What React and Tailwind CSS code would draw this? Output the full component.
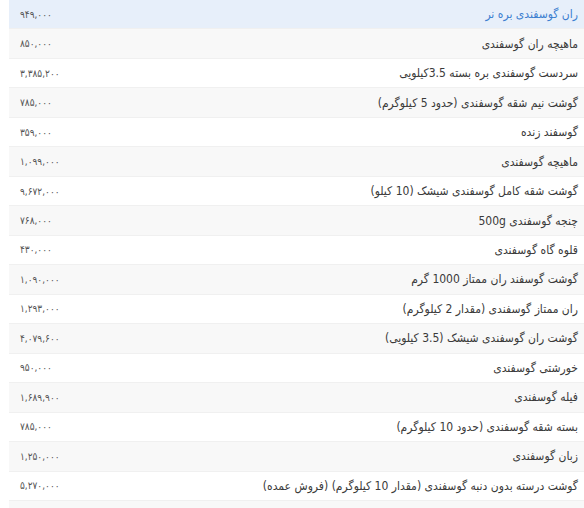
import React from 'react';

const rows = [
  ['ران گوسفندی بره نر', '۹۴۹,۰۰۰'],
  ['ماهیچه ران گوسفندی', '۸۵۰,۰۰۰'],
  ['سردست گوسفندی بره بسته 3.5کیلویی', '۳,۳۸۵,۲۰۰'],
  ['گوشت نیم شقه گوسفندی (حدود 5 کیلوگرم)', '۷۸۵,۰۰۰'],
  ['گوسفند زنده', '۳۵۹,۰۰۰'],
  ['ماهیچه گوسفندی', '۱,۰۹۹,۰۰۰'],
  ['گوشت شقه کامل گوسفندی شیشک (10 کیلو)', '۹,۶۷۲,۰۰۰'],
  ['چنجه گوسفندی 500g', '۷۶۸,۰۰۰'],
  ['قلوه گاه گوسفندی', '۴۳۰,۰۰۰'],
  ['گوشت گوسفند ران ممتاز 1000 گرم', '۱,۰۹۰,۰۰۰'],
  ['ران ممتاز گوسفندی (مقدار 2 کیلوگرم)', '۱,۲۹۳,۰۰۰'],
  ['گوشت ران گوسفندی شیشک (3.5 کیلویی)', '۴,۰۷۹,۶۰۰'],
  ['خورشتی گوسفندی', '۹۵۰,۰۰۰'],
  ['فیله گوسفندی', '۱,۶۸۹,۹۰۰'],
  ['بسته شقه گوسفندی (حدود 10 کیلوگرم)', '۷۸۵,۰۰۰'],
  ['زبان گوسفندی', '۱,۲۵۰,۰۰۰'],
  ['گوشت درسته بدون دنبه گوسفندی (مقدار 10 کیلوگرم) (فروش عمده)', '۵,۲۷۰,۰۰۰'],
  ['', ''],
];

const App = () => {
  return (
    <div className="w-[584px] h-[508px] overflow-hidden bg-white pl-[9px] font-['DejaVu_Sans_Condensed','DejaVu_Sans',sans-serif]">
      <div dir="rtl" className="flex flex-col">
        {rows.map(([name, price], index) => (
          <div
            key={index}
            className={`flex h-[29.47px] shrink-0 items-center justify-between border-b border-[#f0f0f0] pr-[6px] pl-[11px] ${
              index === 0 ? 'bg-[#e7effa]' : index % 2 === 1 ? 'bg-[#f8f8f8]' : 'bg-white'
            }`}
          >
            <span className={`text-[12px] ${index === 0 ? 'text-[#3d7fd0]' : 'text-[#3a3a3a]'}`}>{name}</span>
            <span className="text-[10px] text-[#555]">{price}</span>
          </div>
        ))}
      </div>
    </div>
  );
};

export default App;
